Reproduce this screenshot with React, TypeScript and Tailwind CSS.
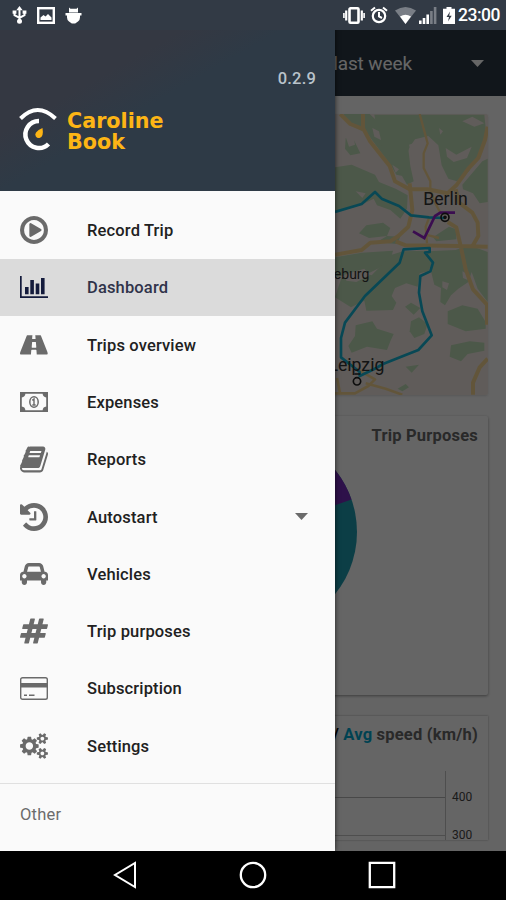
import React from 'react';

type IconProps = { className?: string };

const Glyph = ({ box, d, w = 28, h = 28 }: { box: string; d: string; w?: number; h?: number }) => (
  <svg width={w} height={h} viewBox={box} fill="currentColor">
    <path d={d} />
  </svg>
);

const PlayIcon = () => (
  <Glyph
    box="128 128 1536 1536"
    d="M1312 896q0 37-32 55l-544 320q-15 9-32 9-16 0-32-8-32-19-32-56v-640q0-37 32-56 33-18 64 1l544 320q32 18 32 55zm128 0q0-148-73-273t-198-198-273-73-273 73-198 198-73 273 73 273 198 198 273 73 273-73 198-198 73-273zm224 0q0 209-103 385.5t-279.5 279.5-385.5 103-385.5-103-279.5-279.5-103-385.5 103-385.5 279.5-279.5 385.5-103 385.5 103 279.5 279.5 103 385.5z"
  />
);

const ChartIcon = () => (
  <svg width="28" height="22" viewBox="0 0 28 22" fill="currentColor">
    <path d="M0 0h1.700v20.200H28V22H0zM5 11h3.600v7.200H5zM10.300 4h3.600v14.200h-3.600zM15.700 7.500h3.600v10.700h-3.600zM21 2h3.600v16.200H21z" />
  </svg>
);

const RoadIcon = () => (
  <Glyph
    box="40 256 1840 1280"
    h={20}
    d="M1111 1048v-4l-24-320q-1-13-11-22.5t-23-9.5h-186q-13 0-23 9.5t-11 22.5l-24 320v4q-1 12 8 20t21 8h244q12 0 21-8t8-20zm749 407q0 73-46 73h-704q13 0 22-9.5t8-22.5l-20-256q-1-13-11-22.5t-23-9.5h-272q-13 0-23 9.5t-11 22.5l-20 256q-1 13 8 22.5t22 9.5h-704q-46 0-46-73 0-54 26-116l417-1044q8-19 26-33t38-14h339q-13 0-23 9.5t-11 22.5l-15 192q-1 14 8 23t22 9h166q13 0 22-9t8-23l-15-192q-1-13-11-22.5t-23-9.5h339q20 0 38 14t26 33l417 1044q26 62 26 116z"
  />
);

const MoneyIcon = () => (
  <svg width="28" height="20" viewBox="0 0 28 20">
    <path fill="currentColor" fillRule="evenodd" d="M0 0h28v20H0zM5.400 1.800Q5 4.900 1.800 5.400V14.600Q5 15 5.400 18.200H22.600Q23 15 26.200 14.600V5.400Q23 5 22.600 1.800z" />
    <ellipse cx="14" cy="10" rx="4.200" ry="5.200" fill="none" stroke="currentColor" strokeWidth="1.500" />
    <path d="M12.300 8.400l1.700-1.400v6M12.300 13h3.400" fill="none" stroke="currentColor" strokeWidth="1.400" />
  </svg>
);

const BookIcon = () => (
  <Glyph
    box="64 128 1664 1536"
    h={27}
    d="M1703 478q40 57 18 129l-275 906q-19 64-76.500 107.500t-122.500 43.500h-923q-77 0-148.500-53.500t-99.500-131.500q-24-67-2-127 0-4 3-27t4-37q1-8-3-21.500t-3-19.500q2-11 8-21t16.500-23.500 16.500-23.500q23-38 45-91.500t30-91.500q3-10 .5-30t-.5-28q3-11 17-28t17-23q21-36 42-92t25-90q1-9-2.500-32t.5-28q4-13 22-30.500t22-22.500q19-26 42.500-84.500t27.500-96.500q1-8-3-25.500t-2-26.500q2-8 9-18t18-23 17-21q8-12 16.500-30.500t15-35 16-36 19.500-32 26.500-23.500 36-11.500 47.500 5.500l-1 3q38-9 51-9h761q74 0 114 56t18 130l-274 906q-36 119-71.500 153.500t-128.500 34.500h-869q-27 0-38 15-11 16-1 43 24 70 144 70h923q29 0 56-15.500t35-41.500l300-987q7-22 5-57 38 15 59 43zm-1064 2q-4 13 2 22.500t20 9.500h608q13 0 25.500-9.500t16.500-22.500l21-64q4-13-2-22.500t-20-9.500h-608q-13 0-25.500 9.500t-16.500 22.500zm-83 256q-4 13 2 22.500t20 9.500h608q13 0 25.500-9.500t16.500-22.500l21-64q4-13-2-22.500t-20-9.500h-608q-13 0-25.500 9.500t-16.500 22.500z"
  />
);

const HistoryIcon = () => (
  <Glyph
    box="128 128 1536 1536"
    d="M1664 896q0 156-61 298t-164 245-245 164-298 61q-172 0-327-72.500t-264-204.500q-7-10-6.500-22.500t8.500-20.500l137-138q10-9 25-9 16 2 23 12 73 95 179 147t225 52q104 0 198.500-40.500t163.500-109.500 109.500-163.500 40.500-198.500-40.500-198.500-109.500-163.500-163.500-109.500-198.500-40.500q-98 0-188 35.500t-160 101.500l137 138q31 30 14 69-17 40-59 40h-448q-26 0-45-19t-19-45v-448q0-42 40-59 39-17 69 14l130 129q107-101 244.500-156.500t284.500-55.500q156 0 298 61t245 164 164 245 61 298zm-640-288v448q0 14-9 23t-23 9h-320q-14 0-23-9t-9-23v-64q0-14 9-23t23-9h224v-352q0-14 9-23t23-9h64q14 0 23 9t9 23z"
  />
);

const CarIcon = () => (
  <Glyph
    box="0 128 2048 1600"
    h={22}
    d="M480 1088q0-66-47-113t-113-47-113 47-47 113 47 113 113 47 113-47 47-113zm36-320h1016l-89-357q-2-8-14-17.500t-21-9.500h-768q-9 0-21 9.500t-14 17.500zm1372 320q0-66-47-113t-113-47-113 47-47 113 47 113 113 47 113-47 47-113zm160-96v384q0 14-9 23t-23 9h-96v128q0 80-56 136t-136 56-136-56-56-136v-128h-1024v128q0 80-56 136t-136 56-136-56-56-136v-128h-96q-14 0-23-9t-9-23v-384q0-93 65.500-158.500t158.500-65.500h28l105-419q23-94 104-157.500t179-63.500h768q98 0 179 63.500t104 157.500l105 419h28q93 0 158.500 65.500t65.500 158.500z"
  />
);

const HashIcon = () => (
  <Glyph
    box="32 128 1728 1536"
    h={26}
    d="M991 1024l64-256h-254l-64 256h254zm768-504l-56 224q-7 24-31 24h-327l-64 256h311q15 0 25 12 10 14 6 28l-56 224q-5 24-31 24h-327l-81 328q-7 24-31 24h-224q-16 0-26-12-9-12-6-28l78-312h-254l-81 328q-7 24-31 24h-225q-15 0-25-12-9-12-6-28l78-312h-311q-15 0-25-12-9-12-6-28l56-224q7-24 31-24h327l64-256h-311q-15 0-25-12-10-14-6-28l56-224q5-24 31-24h327l81-328q7-24 32-24h224q15 0 25 12 9 12 6 28l-78 312h254l81-328q7-24 32-24h224q15 0 25 12 9 12 6 28l-78 312h311q15 0 25 12 9 12 6 28z"
  />
);

const CardIcon = () => (
  <svg width="28" height="23" viewBox="0 0 28 23">
    <rect x="0.700" y="0.700" width="26.600" height="21.600" rx="1.800" fill="none" stroke="currentColor" strokeWidth="1.400" />
    <path d="M1 6h26v4.600H1zM4 17.500h3v1.400H4zM9 17.500h5.500v1.400H9z" fill="currentColor" />
  </svg>
);

const CogsIcon = () => (
  <Glyph
    box="0 0 1920 1792"
    h={26}
    d="M896 896q0-106-75-181t-181-75-181 75-75 181 75 181 181 75 181-75 75-181zm768 512q0-52-38-90t-90-38-90 38-38 90q0 53 37.500 90.500t90.500 37.500 90.500-37.500 37.500-90.500zm0-1024q0-52-38-90t-90-38-90 38-38 90q0 53 37.500 90.500t90.500 37.500 90.500-37.500 37.500-90.500zm-384 421v185q0 10-7 19.500t-16 10.500l-155 24q-11 35-32 76 34 48 90 115 7 11 7 20 0 12-7 19-23 30-82.500 89.500t-78.500 59.500q-11 0-21-7l-115-90q-37 19-77 31-11 108-23 155-7 24-30 24h-186q-11 0-20-7.500t-10-17.500l-23-153q-34-10-75-31l-118 89q-7 7-20 7-11 0-21-8-144-133-144-160 0-9 7-19 10-14 41-53t47-61q-23-44-35-82l-152-24q-10-1-17-9.500t-7-19.500v-185q0-10 7-19.500t16-10.500l155-24q11-35 32-76-34-48-90-115-7-11-7-20 0-12 7-20 22-30 82-89t79-59q11 0 21 7l115 90q34-18 77-32 11-108 23-154 7-24 30-24h186q11 0 20 7.500t10 17.500l23 153q34 10 75 31l118-89q8-7 20-7 11 0 21 8 144 133 144 160 0 8-7 19-12 16-42 54t-45 60q23 48 34 82l152 23q10 2 17 10.500t7 19.500zm640 533v140q0 16-149 31-12 27-30 52 51 113 51 138 0 4-4 7-122 71-124 71-8 0-46-47t-52-68q-20 2-30 2t-30-2q-14 21-52 68t-46 47q-2 0-124-71-4-3-4-7 0-25 51-138-18-25-30-52-149-15-149-31v-140q0-16 149-31 13-29 30-52-51-113-51-138 0-4 4-7 4-2 35-20t59-34 30-16q8 0 46 46.500t52 67.500q20-2 30-2t30 2q51-71 92-112l6-2q4 0 124 70 4 3 4 7 0 25-51 138 17 23 30 52 149 15 149 31zm0-1024v140q0 16-149 31-12 27-30 52 51 113 51 138 0 4-4 7-122 71-124 71-8 0-46-47t-52-68q-20 2-30 2t-30-2q-14 21-52 68t-46 47q-2 0-124-71-4-3-4-7 0-25 51-138-18-25-30-52-149-15-149-31v-140q0-16 149-31 13-29 30-52-51-113-51-138 0-4 4-7 4-2 35-20t59-34 30-16q8 0 46 46.500t52 67.500q20-2 30-2t30 2q51-71 92-112l6-2q4 0 124 70 4 3 4 7 0 25-51 138 17 23 30 52 149 15 149 31z"
  />
);

const Caret = ({ className }: IconProps) => (
  <svg width="13" height="7" viewBox="0 0 14 7" preserveAspectRatio="none" fill="currentColor" className={className}>
    <path d="M0 0h14L7 7z" />
  </svg>
);

const menu = [
  { label: 'Record Trip', icon: PlayIcon },
  { label: 'Dashboard', icon: ChartIcon, active: true },
  { label: 'Trips overview', icon: RoadIcon },
  { label: 'Expenses', icon: MoneyIcon },
  { label: 'Reports', icon: BookIcon },
  { label: 'Autostart', icon: HistoryIcon, expandable: true },
  { label: 'Vehicles', icon: CarIcon },
  { label: 'Trip purposes', icon: HashIcon },
  { label: 'Subscription', icon: CardIcon },
  { label: 'Settings', icon: CogsIcon },
];

const StatusBar = () => (
  <div className="absolute inset-x-0 top-0 z-30 flex h-[30px] items-center justify-between bg-[#323a45] pr-[6px] pl-[12px] text-white">
    <div className="flex items-center gap-[10px]">
      {/* usb */}
      <svg width="15" height="18" viewBox="0 0 15 18" fill="none" stroke="currentColor" strokeWidth="2">
        <path d="M7.500 3v12M2.500 6v3.200l5 2.600 5-2.600V6" />
        <path d="M7.500 0l3.200 4.200H4.300zM0.600 4.500h3.800v3.200H0.600zM10.600 4.500h3.800v3.200h-3.800z" fill="currentColor" stroke="none" />
        <circle cx="7.500" cy="15.300" r="2.500" fill="currentColor" stroke="none" />
      </svg>
      {/* picture */}
      <svg width="18" height="17" viewBox="0 0 18 17">
        <rect x="1.200" y="1.200" width="15.600" height="14.600" fill="none" stroke="currentColor" strokeWidth="2.400" />
        <path d="M3.500 13v-2.500l3-2.500 2 1.500L11 7l3.500 3.500V13z" fill="currentColor" />
      </svg>
      {/* android debug */}
      <svg width="17" height="17" viewBox="0 0 17 17" fill="currentColor">
        <path d="M4 0.500l1.500 1.300h6L13 0.500V5.500H4zM0.500 6h16v2.500h-16zM2 8h13v2.500q0 2.500-2 4l-2.800 2H6.800L4 14.500q-2-1.500-2-4z" />
      </svg>
    </div>
    <div className="flex items-center">
      {/* vibrate */}
      <svg width="22" height="17" viewBox="0 0 22 17" fill="none" stroke="currentColor">
        <rect x="6.500" y="1.300" width="9" height="14.400" rx="1" strokeWidth="2.600" />
        <path d="M3.200 3.500v10M18.800 3.500v10" strokeWidth="2.200" />
        <path d="M0.900 6v5M21.100 6v5" strokeWidth="1.600" />
      </svg>
      {/* alarm */}
      <svg width="18" height="18" viewBox="0 0 18 18" fill="none" stroke="currentColor" strokeWidth="2.200" className="ml-[5px]">
        <circle cx="9" cy="10" r="6.200" />
        <path d="M9 6v4.500l3 1.500M1 4.700l4-3.300M17 4.700l-4-3.300" strokeWidth="2" />
      </svg>
      {/* wifi */}
      <svg width="21" height="17" viewBox="0 0 21 17" fill="currentColor" className="ml-[7px]">
        <path d="M0 3.500Q10.500-3.500 21 3.500L10.500 17z" opacity="0.350" />
        <path d="M5 9.500q5.500-3.500 11 0L10.500 17z" />
      </svg>
      {/* signal */}
      <svg width="18" height="17" viewBox="0 0 18 17" fill="currentColor" className="ml-[3px]">
        <path d="M0 13.500h2.600V17H0zM3.700 11h2.600v6H3.700zM7.400 7.500H10V17H7.400z" />
        <path d="M11.100 4h2.600v13h-2.600zM14.800 0h2.600v17h-2.600z" opacity="0.350" />
      </svg>
      {/* battery */}
      <svg width="12" height="17" viewBox="0 0 12 17" className="ml-[6px]">
        <path d="M3.500 0h5v1.800H12V17H0V1.800h3.500z" fill="currentColor" />
        <path d="M7 4.500L3.500 10H6l-1 4.500L8.700 8.700H6.200z" fill="#323a45" />
      </svg>
      <span className="mt-[2px] ml-[3px] text-[17.500px] leading-none font-medium tracking-[-0.500px]">23:00</span>
    </div>
  </div>
);

const TripMap = () => (
  <svg width="153" height="281" viewBox="18 18 459 843" className="ml-auto block">
    <rect x="18" y="18" width="459" height="843" fill="#efe7e0" />
    {/* forests */}
    <g fill="#bedbb6">
      <path d="M44 18h78l32 30 70 20 26 30-14 34 6 40-10 34-30-6-14-24-44-60-30-40-40-20-26-20z" />
      <path d="M136 20h330l6 60-22 60-30 50-36 30-26-8-20-40-10-60-30-28-40 10-20 30 6 50 10 46-20 10-34-60-50-70z" />
      <path d="M18 178l50-8 70 30 12 22 50 20 36 20-2 40-20 30-30-26-40-14-10-20-40 20-28 8-48 14z" />
      <path d="M50 90l20-4 24 50-30 6-16-20z" />
      <path d="M400 230l60-70 16-8v130l-24 4-20-30-30-12z" />
      <path d="M112 352l50-8 22 16-10 24-54 6-30-14zM174 384l40 2-10 22-60-6z" />
      <path d="M330 376l30-20 22 8v30l-60 6-10-12z" />
      <path d="M18 448l80-14 94-6-10 36-60 30-104 12z" />
      <path d="M222 430l76-2 14 32-14 30-26 6-6 40-34-10-34 14-10 24 14 20-10 22-80 2-6-30-40 20-48-30 20-60 50-16 40 10 60-62z" />
      <path d="M300 430l80-4 40-14 30 10 26 10v150l-30-40-18-50-10 30-30 20-22 20-18 30-14-10 2-42-20-10-10-40z" />
      <path d="M356 610l44-18 46 10 24 40v20l-60 8-54-22z" />
      <path d="M80 652l50-12 14 22 50 16-10 22-10 26-60-10-46 18-10-20 20-30z" />
      <path d="M246 640l24-12 26 20-10 30-30 12-14-20z" />
      <path d="M366 712l56-12 44 4v24l-50 10-20 22-34-14z" />
      <path d="M228 596l18-12 28 16-20 20zM230 776l40-6-22 24zM206 842l24-14 10 10-20 12z" />
      <path d="M446 490l28-10v50l-20 10z" />
    </g>
    {/* clearings */}
    <g fill="#efe7e0">
      <path d="M240 110l40-14 34 16 14 50-20 34-44-6-14-36zM48 80l26 4 4 26-18 6zM350 120l32 20 46-24-14 34-40 12-20-16zM400 40l30-14 36 20-30 10zM130 60l20 10 6 26-20-10zM46 500l60-18 16 20-40 20-30-4zM340 520l20 6-6 20-14-8zM80 250l30 6-10 14zM190 170l20 14-10 10zM330 60l12 10-8 10zM400 490l12 6 4 20-14-6z" />
    </g>
    {/* roads */}
    <g fill="none" stroke="#f6d592" strokeWidth="12" strokeLinejoin="round">
      <path d="M34 18l30 30 40 16 18 34 36 46 24 30 16 46 44 24h54l60 12 26-24 36-50 30-32 20-54 8-40" />
      <path d="M102 18v46M18 440l80-14 26-22 60-4 24-16 30-28 12-50-8-80" />
      <path d="M200 400l30 12 160 2 86 2M380 244l10 40 40 30 16 30 2 40-16 28M356 342l26 16 14 60 14 66 22 60 42 46v60" />
      <path d="M476 752l-24 26-20 46v36" />
      <path d="M18 856h60l40-22 20-20-46-26M110 826l60 16 50 18M34 860l-10-50" strokeWidth="8" />
      <path d="M272 18l24 88-12 30v44l20 40v24l14 40 18 34" strokeWidth="7" />
      <path d="M290 380l40 10M300 330l-10 26 4 50" strokeWidth="7" />
    </g>
    {/* recorded routes */}
    <g fill="none" stroke="#14b4d4" strokeWidth="8" strokeLinejoin="round">
      <path d="M18 312l80-24 40-36 20 20 52 22 36 28 54 6 46 2" />
      <path d="M92 792l-10-8-46-36V690l12-46 60-80 104-100 12-40 78-4v12l-14 2 24 30-8 26-30 14-4 50 10 56 28 72-40 44-40 16-66 26-20 12-50 24z" />
    </g>
    <path d="M252 370l34 20 32-66 16-10h44" fill="none" stroke="#9422c8" strokeWidth="8" />
    <g fill="none" stroke="#222" strokeWidth="5">
      <circle cx="348" cy="328" r="12" />
      <circle cx="348" cy="328" r="3" />
      <circle cx="84" cy="820" r="11" />
      <path d="M76 798h18" />
    </g>
    <g fill="#333" fontFamily="Roboto, sans-serif">
      <text x="283" y="291" fontSize="53" textLength="133">Berlin</text>
      <text x="166" y="788" fontSize="53" textAnchor="end">Leipzig</text>
      <text x="121" y="514" fontSize="42" textAnchor="end">Magdeburg</text>
    </g>
  </svg>
);

const Dashboard = () => (
  <div className="flex h-[851px] flex-col bg-[#fafafa] pt-[30px]">
    <div className="flex h-[66px] shrink-0 items-center justify-end bg-[#2c3845] pt-[2px] pr-[22px] text-white">
      <span className="text-[19px] tracking-[-0.100px]">last week</span>
      <Caret className="mb-[2px] ml-[59px]" />
    </div>
    <div className="flex flex-col gap-[21px] pt-[18px] pr-[18px] pl-[17px]">
      <div className="overflow-hidden rounded-[2px] shadow">
        <TripMap />
      </div>
      <div className="h-[279px] rounded-[2px] bg-[#fdfdfd] pt-[8px] shadow-[0_1px_3px_rgba(0,0,0,0.4)]">
        <h2 className="pr-[10px] text-right text-[16.500px] leading-[24px] font-bold tracking-[0.200px] text-[#666]">Trip Purposes</h2>
        <svg width="200" height="200" viewBox="158 433 200 200" className="mt-[-15px] ml-[141px] block">
          <circle cx="258" cy="532" r="99" fill="#1f9caf" />
          <path d="M258 532L351.500 499.500A99 99 0 0 0 258 433z" fill="#742bb8" />
        </svg>
      </div>
      <div className="h-[124px] overflow-hidden bg-[#fdfdfd] pt-[7px] shadow-[0_0_2px_rgba(0,0,0,0.35)]">
        <h2 className="pr-[10px] text-right text-[16.500px] leading-[24px] font-bold tracking-[0.200px] text-[#666]">
          <span className="text-black">/ </span>
          <span className="text-[#00a5cc]">Avg</span> speed (km/h)
        </h2>
        <div className="mt-[24px] flex">
          <div className="flex h-[80px] flex-1 flex-col border-r border-[#c4c4c4] pt-[26px]">
            <div className="h-[38px] shrink-0 border-t border-[#b4b4b4]" />
            <div className="border-t border-[#c4c4c4]" />
          </div>
          <div className="flex w-[42px] flex-col gap-[20px] pt-[17px] pl-[6px] text-[12px] leading-[18px] text-[#444]">
            <span>400</span>
            <span>300</span>
          </div>
        </div>
      </div>
    </div>
  </div>
);

const Drawer = () => (
  <aside className="absolute top-0 left-0 z-20 flex h-[851px] w-[335px] flex-col bg-[#fafafa] shadow-[0_0_5px_rgba(0,0,0,0.7)]">
    <header className="h-[191px] bg-linear-to-br from-[#343842] from-35% to-[#2e3a46] to-50% pt-[69px]">
      <p className="pr-[19px] text-right text-[16.500px] leading-[20px] font-medium tracking-[0.200px] text-[#b9c3cb]">0.2.9</p>
      <div className="mt-[17px] flex items-start pl-[19px]">
        <svg width="40" height="46" viewBox="19 106 40 46" fill="none">
          <path d="M20.500 118.500q17-17 35 0" stroke="#fff" strokeWidth="4" />
          <path d="M39 121A13.500 13.500 0 1 0 48.500 144" stroke="#fff" strokeWidth="4.500" />
          <path d="M42.500 128q1.500 9-3 10a3.500 3.500 0 0 1-3.500-5.500q2-3 6.500-4.500z" fill="#fdb515" />
        </svg>
        <div className="ml-[8px] pt-[5px] font-['DejaVu_Sans',sans-serif] text-[20.700px] leading-[21px] font-bold text-[#fdb515]">
          <p>Caroline</p>
          <p>Book</p>
        </div>
      </div>
    </header>
    <nav className="pt-[10.500px] pb-[9px]">
      {menu.map((item) => (
        <div
          key={item.label}
          className={
            item.active
              ? 'flex h-[57.300px] items-center bg-[#dbdbdb] pl-[20px] text-[#141b3c]'
              : 'flex h-[57.300px] items-center pl-[20px] text-[#6a6a6a]'
          }
        >
          <span className="flex w-[67px] items-center">
            <item.icon />
          </span>
          <span
            className={
              item.active
                ? 'pt-[2.500px] text-[16.500px] font-medium tracking-[0.150px] text-[#30334a]'
                : 'pt-[2.500px] text-[16.500px] font-medium tracking-[0.150px] text-[#212121]'
            }
          >
            {item.label}
          </span>
          {item.expandable && <Caret className="mr-[27px] ml-auto" />}
        </div>
      ))}
    </nav>
    <div className="flex flex-1 items-start border-t border-[#e0e0e0] pt-[19px] pl-[20px] text-[16.500px] leading-[24px] tracking-[0.200px] text-[#6c6c6c]">Other</div>
  </aside>
);

const NavBar = () => (
  <div className="relative z-30 flex h-[49px] items-center justify-between bg-black pr-[110px] pb-[1px] pl-[113px]">
    <svg width="24" height="28" viewBox="0 0 24 28" fill="none" stroke="white" strokeWidth="2">
      <path d="M22 2v24L2 14z" />
    </svg>
    <svg width="28" height="28" viewBox="0 0 28 28" fill="none" stroke="white" strokeWidth="2.300">
      <circle cx="14" cy="14" r="12.200" />
    </svg>
    <svg width="28" height="28" viewBox="0 0 28 28" fill="none" stroke="white" strokeWidth="2.300">
      <path d="M1.800 1.800h24.400v24.400H1.800z" />
    </svg>
  </div>
);

const App = () => {
  return (
    <div className="relative h-[900px] w-[506px] overflow-hidden bg-black font-[Roboto,sans-serif]">
      <Dashboard />
      <div className="absolute inset-x-0 top-0 z-10 h-[851px] bg-black/60" />
      <Drawer />
      <StatusBar />
      <NavBar />
    </div>
  );
};

export default App;
